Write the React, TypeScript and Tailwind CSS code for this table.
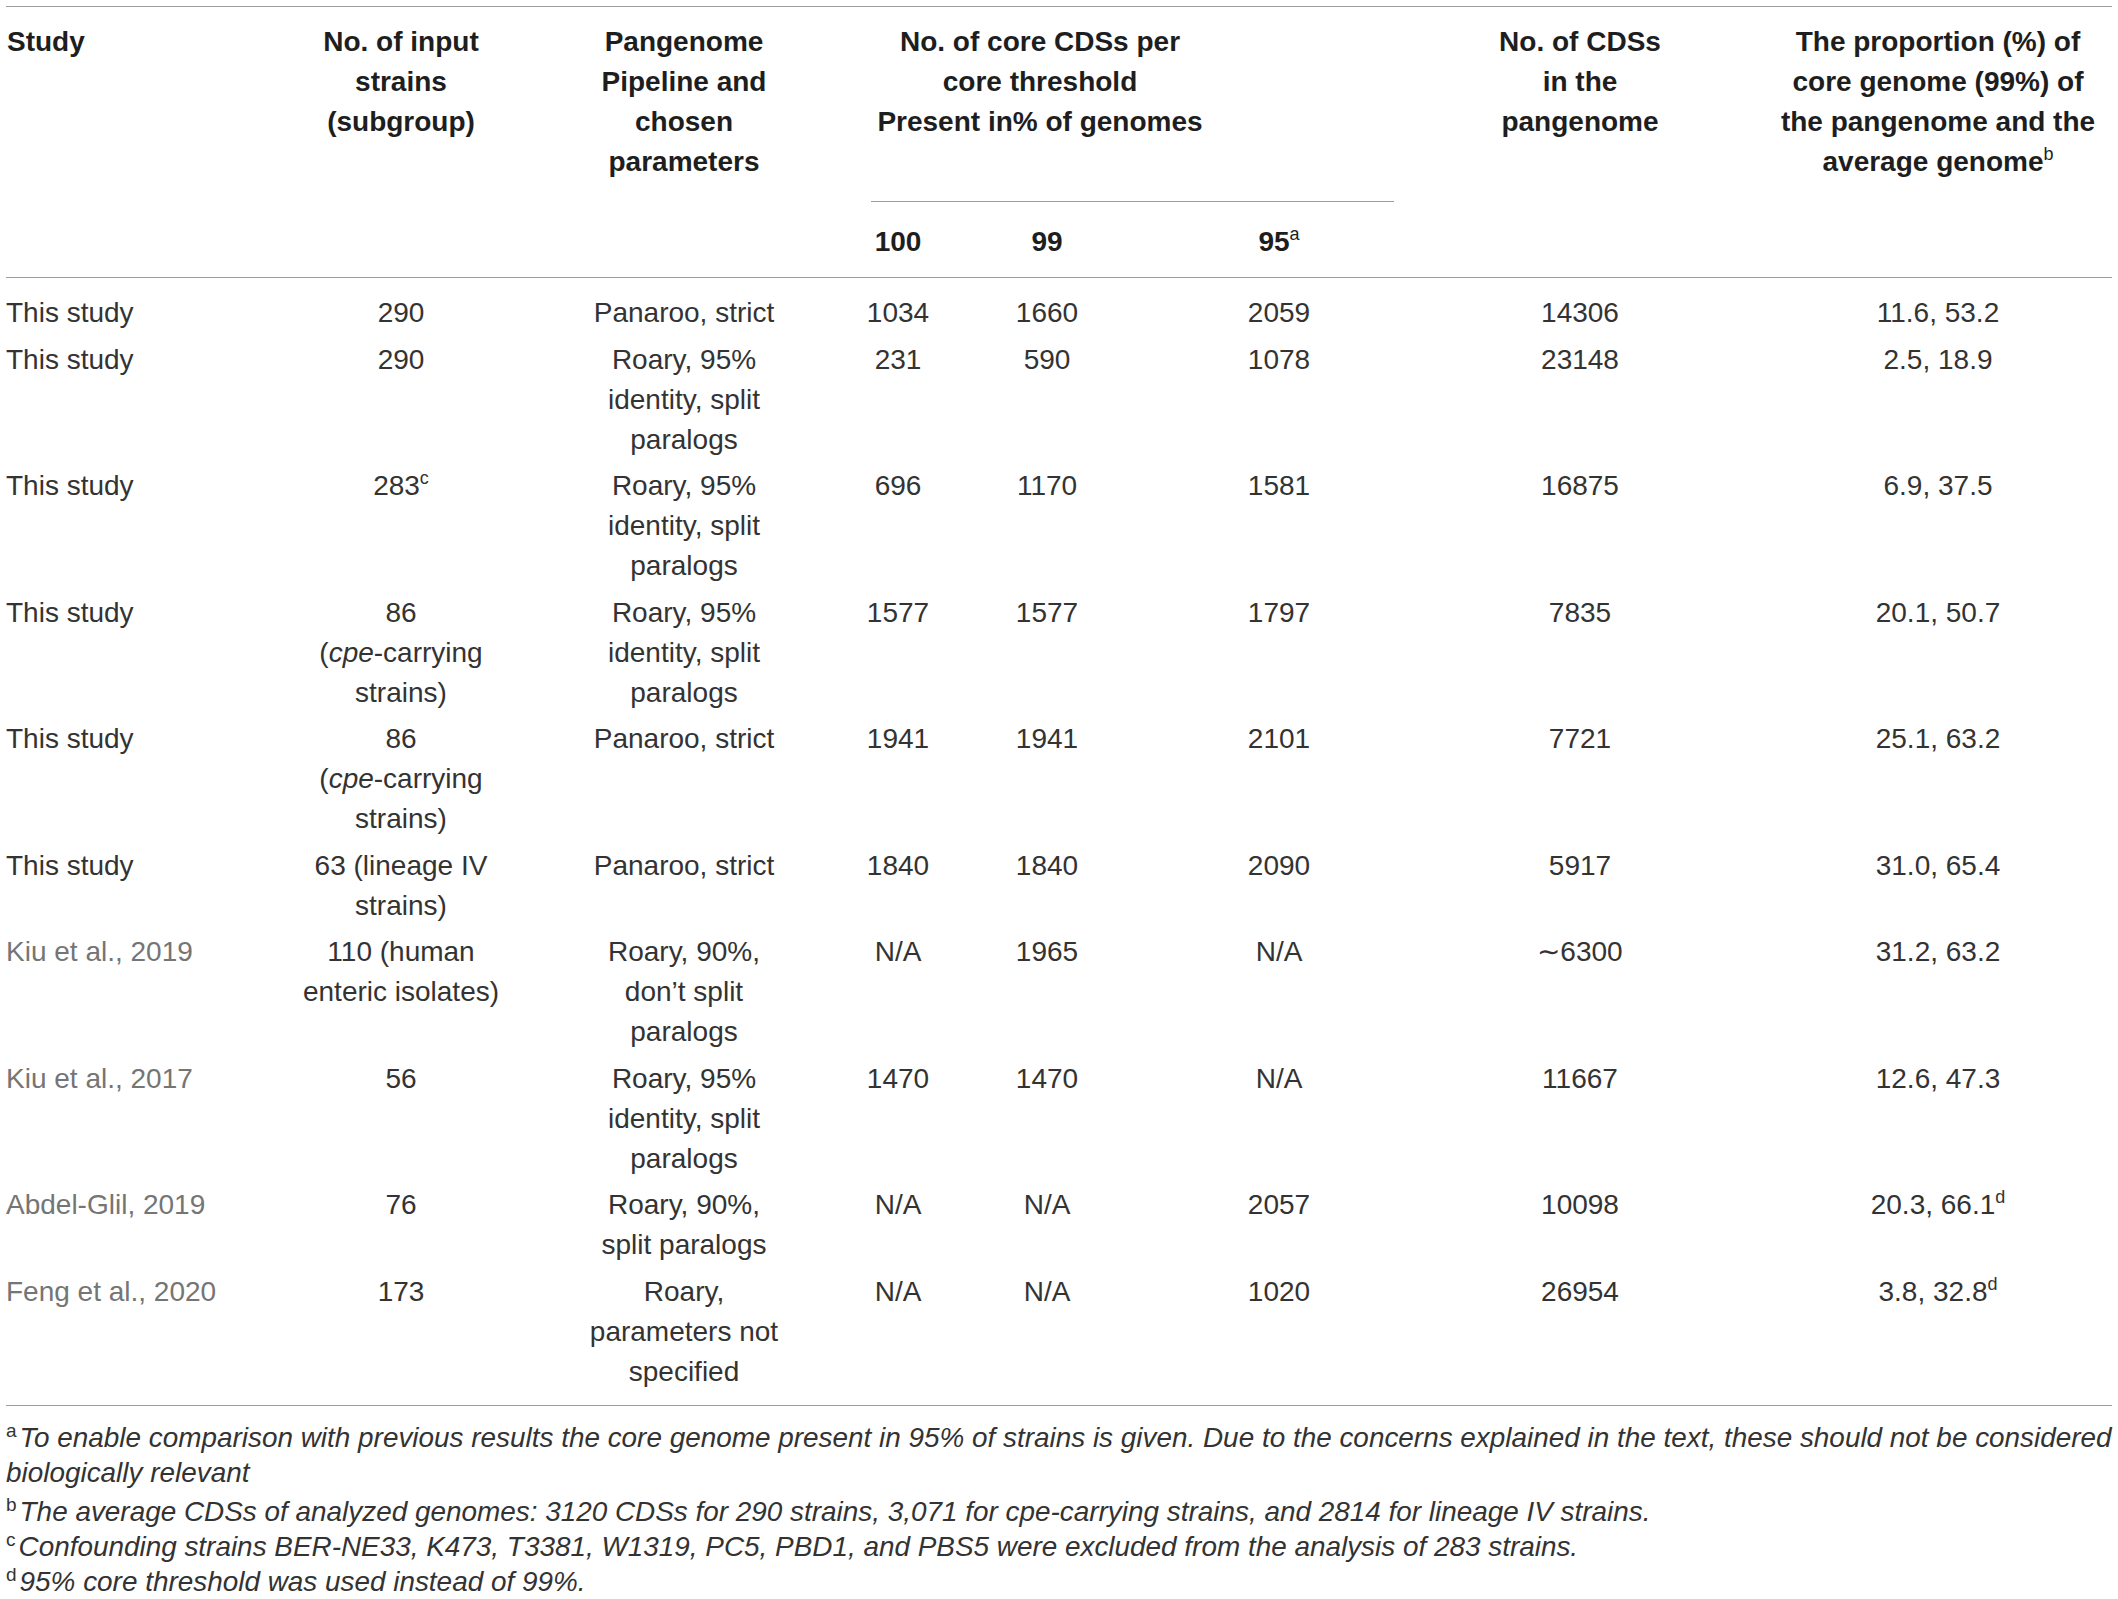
import type { ReactNode } from 'react';

const grid = 'grid grid-cols-[292px_206px_360px_68px_230px_234px_368px_348px]';

const Sup = ({ children }: { children: ReactNode }) => (
  <span className="relative -top-[11px] text-[18px] leading-none font-normal">{children}</span>
);

const Cpe = () => <i>cpe</i>;

type Row = { study: string; cited?: boolean; cells: ReactNode[][] };

const rows: Row[] = [
  {
    study: 'This study',
    cells: [['290'], ['Panaroo, strict'], ['1034'], ['1660'], ['2059'], ['14306'], ['11.6, 53.2']],
  },
  {
    study: 'This study',
    cells: [['290'], ['Roary, 95%', 'identity, split', 'paralogs'], ['231'], ['590'], ['1078'], ['23148'], ['2.5, 18.9']],
  },
  {
    study: 'This study',
    cells: [
      [<>283<Sup>c</Sup></>],
      ['Roary, 95%', 'identity, split', 'paralogs'],
      ['696'], ['1170'], ['1581'], ['16875'], ['6.9, 37.5'],
    ],
  },
  {
    study: 'This study',
    cells: [
      ['86', <>(<Cpe />-carrying</>, 'strains)'],
      ['Roary, 95%', 'identity, split', 'paralogs'],
      ['1577'], ['1577'], ['1797'], ['7835'], ['20.1, 50.7'],
    ],
  },
  {
    study: 'This study',
    cells: [
      ['86', <>(<Cpe />-carrying</>, 'strains)'],
      ['Panaroo, strict'],
      ['1941'], ['1941'], ['2101'], ['7721'], ['25.1, 63.2'],
    ],
  },
  {
    study: 'This study',
    cells: [['63 (lineage IV', 'strains)'], ['Panaroo, strict'], ['1840'], ['1840'], ['2090'], ['5917'], ['31.0, 65.4']],
  },
  {
    study: 'Kiu et al., 2019',
    cited: true,
    cells: [
      ['110 (human', 'enteric isolates)'],
      ['Roary, 90%,', 'don’t split', 'paralogs'],
      ['N/A'], ['1965'], ['N/A'], ['∼6300'], ['31.2, 63.2'],
    ],
  },
  {
    study: 'Kiu et al., 2017',
    cited: true,
    cells: [['56'], ['Roary, 95%', 'identity, split', 'paralogs'], ['1470'], ['1470'], ['N/A'], ['11667'], ['12.6, 47.3']],
  },
  {
    study: 'Abdel-Glil, 2019',
    cited: true,
    cells: [
      ['76'], ['Roary, 90%,', 'split paralogs'], ['N/A'], ['N/A'], ['2057'], ['10098'],
      [<>20.3, 66.1<Sup>d</Sup></>],
    ],
  },
  {
    study: 'Feng et al., 2020',
    cited: true,
    cells: [
      ['173'], ['Roary,', 'parameters not', 'specified'], ['N/A'], ['N/A'], ['1020'], ['26954'],
      [<>3.8, 32.8<Sup>d</Sup></>],
    ],
  },
];

function Lines({ lines, className = '' }: { lines: ReactNode[]; className?: string }) {
  return (
    <div className={`flex flex-col items-center whitespace-nowrap ${className}`}>
      {lines.map((l, i) => (
        <div key={i} className="h-[40px] leading-[40px]">{l}</div>
      ))}
    </div>
  );
}

const footnotes: { mark: string; lines: ReactNode[] }[] = [
  {
    mark: 'a',
    lines: [
      'To enable comparison with previous results the core genome present in 95% of strains is given. Due to the concerns explained in the text, these should not be considered',
      'biologically relevant',
    ],
  },
  {
    mark: 'b',
    lines: ['The average CDSs of analyzed genomes: 3120 CDSs for 290 strains, 3,071 for cpe-carrying strains, and 2814 for lineage IV strains.'],
  },
  {
    mark: 'c',
    lines: ['Confounding strains BER-NE33, K473, T3381, W1319, PC5, PBD1, and PBS5 were excluded from the analysis of 283 strains.'],
  },
  { mark: 'd', lines: ['95% core threshold was used instead of 99%.'] },
];

export default function App() {
  return (
    <div className="w-[2118px] h-[1599px] overflow-hidden bg-white font-['Liberation_Sans',Arial,sans-serif] text-[28px] text-[#333]">
      <div className="ml-[6px] w-[2106px] pt-[6px]">
        {/* header */}
        <div className={`${grid} border-y border-[#9d9d9d] font-bold text-[#1e1e1e]`}>
          <div className="row-span-2 pt-[15px] pl-[1px] leading-[40px]">Study</div>
          <Lines className="row-span-2 pt-[15px]" lines={['No. of input', 'strains', '(subgroup)']} />
          <Lines className="row-span-2 pt-[15px]" lines={['Pangenome', 'Pipeline and', 'chosen', 'parameters']} />
          <div className="col-span-3 pl-[7px] pr-[2px]">
            <div className="h-[195px] border-b border-[#9d9d9d] pt-[15px]">
              <Lines className="w-[338px]" lines={['No. of core CDSs per', 'core threshold', 'Present in% of genomes']} />
            </div>
          </div>
          <Lines className="row-span-2 pt-[15px]" lines={['No. of CDSs', 'in the', 'pangenome']} />
          <Lines
            className="row-span-2 pt-[15px]"
            lines={['The proportion (%) of', 'core genome (99%) of', 'the pangenome and the', <>average genome<Sup>b</Sup></>]}
          />
          <Lines className="pt-[20px] pb-[15px]" lines={['100']} />
          <Lines className="pt-[20px] pb-[15px]" lines={['99']} />
          <Lines className="pt-[20px] pb-[15px]" lines={[<>95<Sup>a</Sup></>]} />
        </div>

        {/* body */}
        <div className="pt-[12px] pb-[10px] border-b border-[#9d9d9d]">
          {rows.map((r, i) => (
            <div key={i} className={`${grid} py-[3.25px]`}>
              <div className={`leading-[40px] whitespace-nowrap ${r.cited ? 'text-[#757575]' : ''}`}>{r.study}</div>
              {r.cells.map((c, j) => (
                <Lines key={j} lines={c} />
              ))}
            </div>
          ))}
        </div>

        {/* footnotes */}
        <div className="pt-[14px] text-[27.9px] italic whitespace-nowrap">
          {footnotes.map((f, k) => (
            <div key={f.mark} className={k === 0 ? 'mb-[4px]' : ''}>
              {f.lines.map((l, i) => (
                <div key={i} className="h-[35px] leading-[35px]">
                  {i === 0 && (
                    <span className="not-italic relative -top-[10px] text-[19px] leading-none mr-[3px]">{f.mark}</span>
                  )}
                  {l}
                </div>
              ))}
            </div>
          ))}
        </div>
      </div>
    </div>
  );
}
